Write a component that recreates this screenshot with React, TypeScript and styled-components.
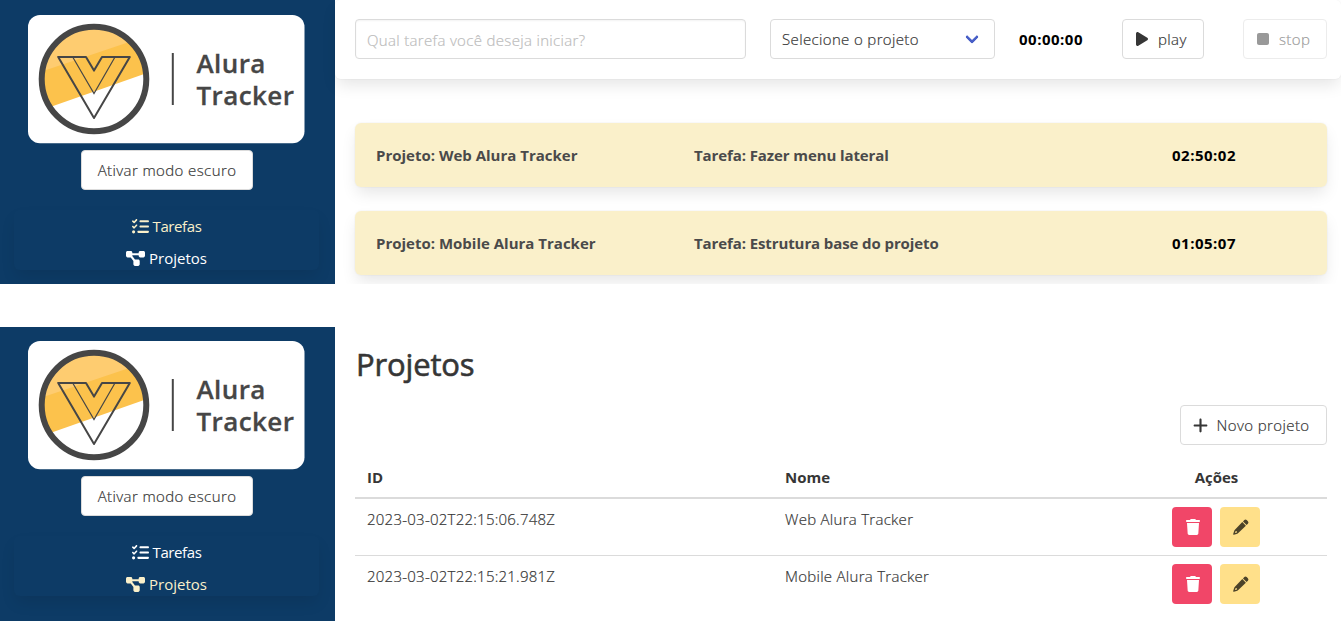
import React from "react";
import styled, { createGlobalStyle, css } from "styled-components";
import {
  FaDiagramProject,
  FaListCheck,
  FaPlay,
  FaPlus,
  FaStop,
  FaTrash,
} from "react-icons/fa6";

const GlobalStyle = createGlobalStyle`
  *, *::before, *::after { box-sizing: border-box; }
  body {
    margin: 0;
    background: #fff;
    color: #4a4a4a;
    font-family: "Open Sans", "Noto Sans", sans-serif;
    font-size: 15px;
    line-height: 24px;
    overflow: hidden;
  }
`;

const boxShadow = css`
  box-shadow: 0 8px 16px -2px rgba(10, 10, 10, 0.1), 0 0 0 1px rgba(10, 10, 10, 0.02);
`;

/* Light weight, thickened slightly so it stays legible at body size. */
const lightText = css`
  font-weight: 300;
  -webkit-text-stroke: 0.2px currentColor;
`;

const Page = styled.div`
  display: flex;
  flex-direction: column;
  gap: 43px;
  width: 1341px;
`;

const Screen = styled.section<{ $height: number }>`
  display: grid;
  grid-template-columns: 335px 1fr;
  height: ${(p) => p.$height}px;
  overflow: hidden;
`;

const Sidebar = styled.header<{ $top: number }>`
  display: flex;
  flex-direction: column;
  align-items: center;
  padding: ${(p) => p.$top}px 16px 0 14px;
  background: #0d3b66;
`;

const LogoSvg = styled.svg`
  display: block;
  width: 277px;
  height: 129px;
  margin-right: 1px;
  flex: none;
`;

const Button = styled.button<{ $width?: number }>`
  display: inline-flex;
  align-items: center;
  justify-content: center;
  flex: none;
  width: ${(p) => (p.$width ? `${p.$width}px` : "auto")};
  height: 40px;
  padding: 0;
  border: 1px solid #dbdbdb;
  border-radius: 4px;
  background: #fff;
  color: #363636;
  font: 15px/24px "Open Sans", "Noto Sans", sans-serif;
  ${lightText}
  letter-spacing: 0.4px;
  white-space: nowrap;

  &:disabled { opacity: 0.5; }
  svg { flex: none; }
`;

const ThemeButton = styled(Button)`
  margin: 6px 0 0 1px;
`;

const Menu = styled.nav`
  display: flex;
  flex-direction: column;
  align-items: center;
  gap: 8px;
  width: 305px;
  height: 60px;
  margin-top: 20px;
  padding-top: 4px;
  border-radius: 6px;
  box-shadow: 0 8px 16px -2px rgba(10, 10, 10, 0.1);
`;

const MenuLink = styled.a<{ $active?: boolean; $tracking?: number }>`
  display: flex;
  align-items: center;
  gap: 4px;
  color: ${(p) => (p.$active ? "#faf0ca" : "#fff")};
  font-size: 15px;
  letter-spacing: ${(p) => p.$tracking ?? 0}px;
`;

const Main = styled.main`
  min-width: 0;
`;

const Form = styled.form`
  display: flex;
  align-items: flex-start;
  height: 79px;
  padding: 19px 14px 0 20px;
  border-radius: 6px;
  ${boxShadow}
`;

const TaskInput = styled.input`
  width: 391px;
  height: 40px;
  padding: 2px 11px 0;
  border: 1px solid #dbdbdb;
  border-radius: 4px;
  box-shadow: inset 0 1px 2px rgba(10, 10, 10, 0.05);
  color: #363636;
  font: 15px/24px "Open Sans", "Noto Sans", sans-serif;
  ${lightText}
  letter-spacing: 0.33px;
  outline: none;

  &::placeholder { color: #bcbcbc; opacity: 1; }
`;

const ProjectSelect = styled.div`
  display: flex;
  align-items: center;
  justify-content: space-between;
  width: 225px;
  height: 40px;
  margin-left: 24px;
  padding: 0 17px 0 11px;
  border: 1px solid #dbdbdb;
  border-radius: 4px;
  color: #363636;
  ${lightText}
  letter-spacing: 0.36px;

  &::after {
    content: "";
    width: 10px;
    height: 10px;
    margin-top: -4px;
    border: 3px solid #485fc7;
    border-top: 0;
    border-right: 0;
    border-radius: 2px;
    transform: rotate(-45deg);
  }
`;

const Clock = styled.strong`
  color: #000;
  font-size: 15px;
  font-weight: 700;
  letter-spacing: 0.5px;
`;

const TimerControls = styled.div`
  display: flex;
  flex: 1;
  align-items: center;
  justify-content: space-between;
  margin-left: 24px;
`;

const TaskList = styled.div`
  display: flex;
  flex-direction: column;
  gap: 24px;
  padding: 44px 14px 0 20px;
`;

const TaskCard = styled.article`
  display: grid;
  grid-template-columns: 318px 478px 1fr;
  align-items: center;
  height: 64px;
  padding: 0 21px;
  border-radius: 6px;
  background: #faf0ca;
  font-weight: 700;
  ${boxShadow}
`;

const TaskName = styled.span`
  letter-spacing: -0.1px;
`;

const Projects = styled.div`
  display: flex;
  flex-direction: column;
  padding: 12px 14px 0 20px;
`;

const Title = styled.h1`
  margin: 0;
  padding-left: 1px;
  color: #363636;
  font-size: 31px;
  font-weight: 400;
  line-height: 51px;
  letter-spacing: -0.15px;
  -webkit-text-stroke: 0.6px currentColor;
`;

const NewProject = styled(Button)`
  align-self: flex-end;
  gap: 7px;
  margin-top: 15px;
  padding-right: 5px;
`;

const Table = styled.table`
  width: 972px;
  margin-top: 12px;
  border-collapse: separate;
  border-spacing: 0;
  table-layout: fixed;
  color: #363636;
  ${lightText}
  letter-spacing: 0.24px;

  th, td {
    padding: 8px 12px;
    text-align: left;
    vertical-align: top;
  }
  th {
    height: 42px;
    border-bottom: 2px solid #dbdbdb;
    font-weight: 700;
    letter-spacing: 0;
    -webkit-text-stroke: 0;
  }
  td { height: 57px; }
  td:nth-child(2) { letter-spacing: 0.28px; }
  tbody tr:not(:last-child) td { border-bottom: 1px solid #dbdbdb; }
`;

const ActionsHeading = styled.span`
  display: block;
  width: 89px;
  text-align: center;
`;

const Actions = styled.div`
  display: flex;
  gap: 8px;
`;

const ActionButton = styled(Button)<{ $kind: "danger" | "warning" }>`
  padding-left: 1px;
  border: 0;
  background: ${(p) => (p.$kind === "danger" ? "#f14668" : "#ffe08a")};
  color: ${(p) => (p.$kind === "danger" ? "#fff" : "rgba(0, 0, 0, 0.7)")};
`;

const PencilIcon = () => (
  <svg width="16" height="16" viewBox="0 0 16 16" fill="currentColor">
    <path d="M11.3 1.1Q12.5 0 13.7 1.1L14.9 2.3Q16 3.5 14.9 4.7L13.6 6L10 2.4Z" />
    <path
      fillRule="evenodd"
      d="M9.3 3.1L12.9 6.7L5.3 14.1Q4.9 14.5 4.4 14.7L0.9 15.8Q0 16 0.2 15.1L1.3 11.6Q1.5 11.1 1.9 10.7ZM2.5 12.2L1.9 14.1L4 13.5L3.9 12.2Z"
    />
  </svg>
);

const Logo = () => (
  <LogoSvg viewBox="28 15 277 129" role="img" aria-label="Alura Tracker">
    <defs>
      <clipPath id="disc">
        <circle cx="94" cy="79" r="53" />
      </clipPath>
    </defs>
    <rect x="28" y="15" width="276.5" height="128.3" rx="12" fill="#fff" />
    <g clipPath="url(#disc)">
      <path d="M30 15H160V68.5L30 114Z" fill="#fcc24c" />
      <path d="M30 15H160V31.5L30 75.5Z" fill="#fecc70" />
    </g>
    <circle cx="94" cy="79" r="52.3" fill="none" stroke="#464646" strokeWidth="6" />
    <path
      d="M58.2 56.9H86L94 70.6L102 56.9H129.8L94 118Z"
      fill="none"
      stroke="#464646"
      strokeWidth="2"
      strokeLinejoin="round"
    />
    <path d="M72.7 57L94 93.5L115 57" fill="none" stroke="#464646" strokeWidth="1.2" />
    <path d="M172.8 53V105" stroke="#464646" strokeWidth="2" />
    <text
      fill="#464646"
      stroke="#464646"
      strokeWidth="0.3"
      fontFamily="Open Sans, sans-serif"
      fontSize="26"
      fontWeight="600"
      letterSpacing="0.4"
    >
      <tspan x="196.5" y="73">Alura</tspan>
      <tspan x="196.5" y="105">Tracker</tspan>
    </text>
  </LogoSvg>
);

const SideMenu = ({ active, top }: { active: "tarefas" | "projetos"; top: number }) => (
  <Sidebar $top={top}>
    <Logo />
    <ThemeButton $width={172}>Ativar modo escuro</ThemeButton>
    <Menu>
      <MenuLink $active={active === "tarefas"} $tracking={-0.4}>
        <FaListCheck size={17} />
        Tarefas
      </MenuLink>
      <MenuLink $active={active === "projetos"}>
        <FaDiagramProject size={19} />
        Projetos
      </MenuLink>
    </Menu>
  </Sidebar>
);

const tasks = [
  { project: "Web Alura Tracker", name: "Fazer menu lateral", time: "02:50:02" },
  { project: "Mobile Alura Tracker", name: "Estrutura base do projeto", time: "01:05:07" },
];

const projects = [
  { id: "2023-03-02T22:15:06.748Z", name: "Web Alura Tracker" },
  { id: "2023-03-02T22:15:21.981Z", name: "Mobile Alura Tracker" },
];

const PlayButton = styled(Button)`
  justify-content: flex-start;
  gap: 8px;
  margin-left: 15px;
  padding-left: 11px;
`;

export default function App() {
  return (
    <>
      <GlobalStyle />
      <Page>
        <Screen $height={284}>
          <SideMenu active="tarefas" top={15} />
          <Main>
            <Form>
              <TaskInput placeholder="Qual tarefa você deseja iniciar?" />
              <ProjectSelect>Selecione o projeto</ProjectSelect>
              <TimerControls>
                <Clock>00:00:00</Clock>
                <PlayButton type="button" $width={82}>
                  <FaPlay size={16} />
                  play
                </PlayButton>
                <PlayButton type="button" $width={84} disabled>
                  <FaStop size={16} />
                  stop
                </PlayButton>
              </TimerControls>
            </Form>
            <TaskList>
              {tasks.map((t) => (
                <TaskCard key={t.time}>
                  <span>Projeto: {t.project}</span>
                  <TaskName>Tarefa: {t.name}</TaskName>
                  <Clock>{t.time}</Clock>
                </TaskCard>
              ))}
            </TaskList>
          </Main>
        </Screen>
        <Screen $height={294}>
          <SideMenu active="projetos" top={14} />
          <Main>
            <Projects>
              <Title>Projetos</Title>
              <NewProject $width={147}>
                <FaPlus size={17} />
                Novo projeto
              </NewProject>
              <Table>
                <colgroup>
                  <col width={418} />
                  <col width={387} />
                  <col width={167} />
                </colgroup>
                <thead>
                  <tr>
                    <th>ID</th>
                    <th>Nome</th>
                    <th>
                      <ActionsHeading>Ações</ActionsHeading>
                    </th>
                  </tr>
                </thead>
                <tbody>
                  {projects.map((p) => (
                    <tr key={p.id}>
                      <td>{p.id}</td>
                      <td>{p.name}</td>
                      <td>
                        <Actions>
                          <ActionButton $kind="danger" $width={40} aria-label="Excluir">
                            <FaTrash size={16} />
                          </ActionButton>
                          <ActionButton $kind="warning" $width={40} aria-label="Editar">
                            <PencilIcon />
                          </ActionButton>
                        </Actions>
                      </td>
                    </tr>
                  ))}
                </tbody>
              </Table>
            </Projects>
          </Main>
        </Screen>
      </Page>
    </>
  );
}
